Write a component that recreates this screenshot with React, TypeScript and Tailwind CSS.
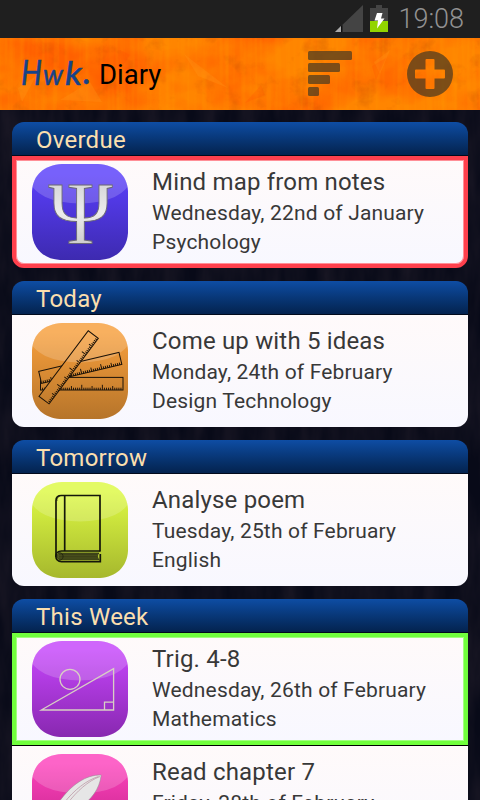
import type { ReactNode } from "react";

type Highlight = "red" | "green" | "none";

function Tile({ id, top, bottom, children }: { id: string; top: string; bottom: string; children: ReactNode }) {
  return (
    <svg viewBox="0 0 96 96" className="h-24 w-24 shrink-0 overflow-visible">
      <defs>
        <linearGradient id={id} x1="0" y1="0" x2="0" y2="96" gradientUnits="userSpaceOnUse">
          <stop offset="0.1" stopColor={top} />
          <stop offset="1" stopColor={bottom} />
        </linearGradient>
        <clipPath id={id + "-clip"}>
          <path d="M30 0H66C84 1 95 11 96 27V69C95 85 84 95 68 96H28C12 95 1 85 0 69V27C1 11 12 1 30 0z" />
        </clipPath>
      </defs>
      <g clipPath={`url(#${id}-clip)`}>
        <rect width="96" height="96" fill={`url(#${id})`} />
        <ellipse cx="48" cy="17" rx="49" ry="22.5" fill="#fff" opacity=".18" />
      </g>
      {children}
    </svg>
  );
}

function PsiIcon() {
  return (
    <Tile id="violet" top="#5a3ffb" bottom="#3d2ab0">
      <defs>
        <linearGradient id="silver" x1="0" y1="0" x2="0" y2="1">
          <stop offset="0" stopColor="#c9c9cd" />
          <stop offset=".5" stopColor="#ececec" />
          <stop offset="1" stopColor="#bcbcbc" />
        </linearGradient>
      </defs>
      <text
        x="48.5"
        y="78.500"
        textAnchor="middle"
        textLength="64"
        lengthAdjust="spacingAndGlyphs"
        fontSize="88"
        className="font-['Liberation_Serif',serif]"
        fill="url(#silver)"
        stroke="#6b6876"
        strokeWidth=".9"
      >
        Ψ
      </text>
    </Tile>
  );
}

function Ruler({ w, h, matrix }: { w: number; h: number; matrix: string }) {
  const ticks = Array.from({ length: 39 }, (_, i) => i + 1);
  return (
    <g transform={matrix} stroke="#1b1208" fill="none">
      <rect width={w} height={h} strokeWidth="1" />
      {ticks.map((i) => (
        <path key={i} d={`M${(i * w) / 40} ${h}v${i % 10 === 0 ? -5.2 : i % 5 === 0 ? -4 : -2.3}`} strokeWidth=".95" />
      ))}
    </g>
  );
}

function RulersIcon() {
  const backing = (points: string, id: string) => (
    <>
      <clipPath id={id}>
        <polygon points={points} />
      </clipPath>
      <polygon points={points} fill="url(#amber)" />
      <ellipse cx="48" cy="17" rx="49" ry="22.5" fill="#fff" opacity=".18" clipPath={`url(#${id})`} />
    </>
  );
  return (
    <Tile id="amber" top="#f79f3c" bottom="#b6742a">
      <Ruler w={82.5} h={12.6} matrix="translate(8.5 54.4)" />
      {backing("6.7,48.3 87,29.3 90,41.3 9.5,60.5", "ruler-b")}
      <Ruler w={82.5} h={12.4} matrix="translate(6.7 48.3) rotate(-13.3)" />
      {backing("56.3,7.7 66.5,15.2 17.2,80.7 7,73.3", "ruler-c")}
      <Ruler w={82} h={12.6} matrix="translate(7 73.3) rotate(-53.1)" />
    </Tile>
  );
}

function BookIcon() {
  return (
    <Tile id="lime" top="#ddf944" bottom="#a6b82d">
      <g fill="none" stroke="#14170a">
        <path d="M68 69.500V13.5H29.500c-3.500 0-5.500 1.800-5.500 5V75" strokeWidth="1.700" />
        <path d="M32.700 13.500V69" strokeWidth="1.700" />
        <path d="M28 14c-2.500 1-3 2.500-3 5" strokeWidth=".6" />
        <path d="M68.300 69H29.500c-7.500 0-7.500 10.600 0 10.600h38.800V72" strokeWidth="1.700" />
        <path d="M27 71h40c-2 2-2 4.500 0 6.500H27c-3-1.500-3-5 0-6.500z" fill="#51571f" strokeWidth=".6" />
        <path d="M27 72.700h38M27 74.300h38M27 76h38" stroke="#2a2e12" strokeWidth=".6" />
        <path d="M26 70.500c6-1 7 7.500 1 8" strokeWidth=".6" />
      </g>
    </Tile>
  );
}

function TrigIcon() {
  return (
    <Tile id="purple" top="#c545fa" bottom="#8828b0">
      <g fill="none" stroke="#d8cfc4" strokeWidth="1.300">
        <path d="M9.300 69L81.600 27.700V69z" />
        <path d="M72.500 69V61.200H81.600" />
        <circle cx="38" cy="38.300" r="10" />
      </g>
    </Tile>
  );
}

function FeatherIcon() {
  return (
    <Tile id="pink" top="#fd42bc" bottom="#b81f80">
      <path d="M69.200 21C54 20.500 39 31 27 48L18 66C34 62 66 50 69.200 21z" fill="#e6e6e6" stroke="#8c8c8c" strokeWidth=".5" />
      <path d="M68 22.500C56 27 45 37 35 50M66.500 22.500C55 26 42 36 32 49" fill="none" stroke="#b8919f" strokeWidth=".7" />
    </Tile>
  );
}

function Section({ title, children }: { title: string; children: ReactNode }) {
  return (
    <section>
      <h2 className="h-[34px] rounded-t-xl border-b border-[#020a1c] bg-linear-to-b from-[#0e4da4] to-[#04234f] pl-6 text-[24px] leading-[37px] tracking-[0.25px] text-[#fbdfae]">
        {title}
      </h2>
      {children}
    </section>
  );
}

function Entry({
  icon,
  title,
  date,
  subject,
  highlight = "none",
  last = true,
}: {
  icon: ReactNode;
  title: string;
  date: string;
  subject: string;
  highlight?: Highlight;
  last?: boolean;
}) {
  const ring =
    highlight === "red"
      ? "border-4 border-[#ff404d] pl-4 pt-1 shadow-[inset_0_0_0_1px_#ff8f97]"
      : highlight === "green"
        ? "border-4 border-[#71ff3d] pl-4 pt-1 shadow-[inset_0_0_0_1px_#a2ff80]"
        : "pl-5 pt-2";
  return (
    <article
      className={`flex h-28 gap-6 bg-linear-to-b from-[#fffafa] to-[#f8f8ff] text-[#383838] ${ring} ${last ? "rounded-b-xl" : ""}`}
    >
      {icon}
      <div className="whitespace-nowrap">
        <h3 className="mt-0.5 h-[31px] text-[24px] leading-[32px] tracking-[0.18px]">{title}</h3>
        <p className="h-[29px] text-[21px] leading-[33px] tracking-[0.17px]">{date}</p>
        <p className="h-[29px] text-[21px] leading-[33px] tracking-[0.17px]">{subject}</p>
      </div>
    </article>
  );
}

function StatusBar() {
  return (
    <div className="flex h-[38px] items-center justify-end bg-[#1f1f1f] pr-4">
      <svg viewBox="0 0 60 38" className="h-[38px] w-[60px]">
        <path d="M6 32L34 5V32z" fill="#444" />
        <path d="M6 32L12 26V32z" fill="#aaa" />
        <path d="M12 26V32H13.500V25z" fill="#111" />
        <path d="M47 5h6v3h6v13H41V8h6z" fill="#444" />
        <path d="M41 21h18v11H41z" fill="#92d400" />
        <path d="M48 13h5.500l-1.500 5.500h3.500l-7.500 10 1-8h-3.500z" fill="#fff" />
      </svg>
      <span className="ml-[9px] text-[27px] font-light leading-[39px] text-[#929292]">19:08</span>
    </div>
  );
}

function Paper() {
  return (
    <svg viewBox="0 0 480 72" className="absolute inset-0 h-full w-full">
      <defs>
        <filter id="blotch" x="0" y="0" width="100%" height="100%" colorInterpolationFilters="sRGB">
          <feTurbulence type="fractalNoise" baseFrequency=".014 .018" numOctaves="4" seed="8" />
          <feColorMatrix values="0 0 0 0 1  0 0 0 0 .33  0 0 0 0 0  2.4 0 0 0 -.8" />
        </filter>
        <filter id="stain" x="0" y="0" width="100%" height="100%" colorInterpolationFilters="sRGB">
          <feTurbulence type="fractalNoise" baseFrequency=".045 .05" numOctaves="4" seed="21" />
          <feColorMatrix values="0 0 0 0 .75  0 0 0 0 .3  0 0 0 0 0  0 3 0 0 -1.7" />
        </filter>
        <filter id="grain" x="0" y="0" width="100%" height="100%" colorInterpolationFilters="sRGB">
          <feTurbulence type="fractalNoise" baseFrequency=".2 .008" numOctaves="2" seed="3" />
          <feColorMatrix values="0 0 0 0 1  0 0 0 0 .62  0 0 0 0 0  1.2 0 0 0 -.5" />
        </filter>
      </defs>
      <rect width="480" height="72" fill="#ff8500" />
      <rect width="480" height="72" filter="url(#blotch)" opacity=".75" />
      <rect width="480" height="72" filter="url(#stain)" opacity=".35" />
      <rect width="480" height="72" filter="url(#grain)" opacity=".5" />
      <path d="M184 16l44 34-30-12zM374 24l16-12-10 24zM18 50l18-12-14 26zM60 62l30-18 12 20z" fill="#ff9a1c" opacity=".25" />
      <path d="M120 12l10 5-8 12zM372 28l14-8-10 22zM245 65l16-18 4 10z" fill="#ff4b00" opacity=".2" />
    </svg>
  );
}

function AppBar() {
  return (
    <header className="relative h-[72px]">
      <Paper />
      <div className="relative flex h-full items-center pl-[21px] pr-[27px] text-[27.5px]">
        <svg viewBox="0 0 74 44" className="h-11 w-[74px] overflow-visible" fill="#164389" stroke="#164389" strokeWidth=".5">
          <text y="33" className="font-['Lato',sans-serif] italic">
            <tspan x="0" fontSize="35" textLength="21" lengthAdjust="spacingAndGlyphs">H</tspan>
            <tspan x="22" fontSize="29" textLength="20" lengthAdjust="spacingAndGlyphs">w</tspan>
            <tspan x="44" y="32.500" fontSize="33" textLength="17" lengthAdjust="spacingAndGlyphs">k</tspan>
            <tspan x="62" y="31.500" fontSize="36">.</tspan>
          </text>
        </svg>
        <span className="ml-1 mt-0.5 text-black">Diary</span>
        <svg viewBox="0 0 44 46" className="ml-auto h-[46px] w-11" fill="#4b3a20" opacity=".72">
          <rect width="44" height="9" y="0" rx="1.500" />
          <rect width="32" height="9" y="12" rx="1.500" />
          <rect width="22" height="9" y="24" rx="1.500" />
          <rect width="11" height="9" y="36" rx="1.500" />
        </svg>
        <svg viewBox="0 0 46 46" className="ml-[55px] h-[46px] w-[46px]" fill="#4b3a20" opacity=".72">
          <path
            fillRule="evenodd"
            d="M23 0a23 23 0 1 1 0 46a23 23 0 1 1 0-46zM19.500 8q-1 0-1 1v9.500H9q-1 0-1 1v7q0 1 1 1h9.500V37q0 1 1 1h7q1 0 1-1v-9.500H37q1 0 1-1v-7q0-1-1-1h-9.500V9q0-1-1-1z"
          />
        </svg>
      </div>
    </header>
  );
}

function Denim() {
  return (
    <svg className="absolute inset-0 h-full w-full">
      <filter id="weave" x="0" y="0" width="100%" height="100%" colorInterpolationFilters="sRGB">
        <feTurbulence type="fractalNoise" baseFrequency=".05 .012" numOctaves="4" seed="5" />
        <feColorMatrix values="0 0 0 0 .1  0 0 0 0 .09  0 0 0 0 .14  1.5 0 0 0 -.4" />
      </filter>
      <rect width="100%" height="100%" filter="url(#weave)" />
    </svg>
  );
}

export default function App() {
  return (
    <div className="flex h-[800px] w-[480px] flex-col overflow-hidden bg-[#080a18] font-['Roboto',sans-serif]">
      <StatusBar />
      <AppBar />
      <main className="relative flex-1 overflow-hidden">
        <Denim />
        <div className="relative flex flex-col gap-[13px] px-3 pt-3">
          <Section title="Overdue">
            <Entry icon={<PsiIcon />} title="Mind map from notes" date="Wednesday, 22nd of January" subject="Psychology" highlight="red" />
          </Section>
          <Section title="Today">
            <Entry icon={<RulersIcon />} title="Come up with 5 ideas" date="Monday, 24th of February" subject="Design Technology" />
          </Section>
          <Section title="Tomorrow">
            <Entry icon={<BookIcon />} title="Analyse poem" date="Tuesday, 25th of February" subject="English" />
          </Section>
          <Section title="This Week">
            <Entry icon={<TrigIcon />} title="Trig. 4-8" date="Wednesday, 26th of February" subject="Mathematics" highlight="green" last={false} />
            <div className="h-px bg-black" />
            <Entry icon={<FeatherIcon />} title="Read chapter 7" date="Friday, 28th of February" subject="English" />
          </Section>
        </div>
      </main>
    </div>
  );
}
